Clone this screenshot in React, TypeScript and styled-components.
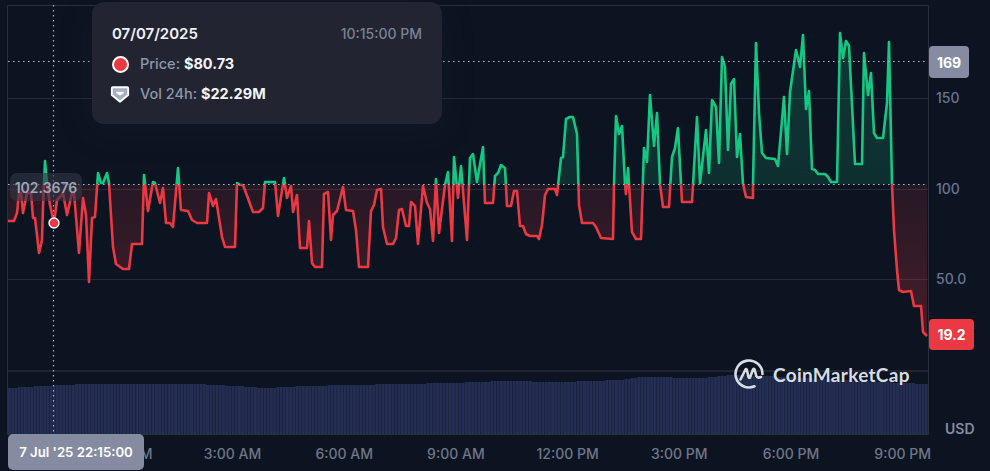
import React from "react";
import styled, { createGlobalStyle } from "styled-components";

const GlobalStyle = createGlobalStyle`
  html, body { margin: 0; padding: 0; background: #0d1421; overflow: hidden; }
  body { font-family: Inter, "Liberation Sans", sans-serif; }
`;

const LINE: [number, number][] = [
  [8,221],[14,221],[17,213],[19,193],[21,193],[23,213],[27,193],[31,193],[33,218],[35,218],[39,253],[42,240],[43,207],[45,161],[47,184],[50,205],[54,223],[57,200],[60,197],[63,193],[67,215],[72,193],[74,193],[79,253],[83,198],[86,215],[89,282],[92,218],[95,217],[98,173],[101,183],[103,183],[107,173],[109,183],
  [113,247],[116,264],[123,269],[129,269],[132,244],[142,244],[144,175],[145,183],[148,211],[153,182],[155,183],[160,203],[163,188],[166,223],[170,223],[173,227],[178,168],[181,210],[188,211],[192,220],[197,223],[207,223],[209,193],[213,206],[216,199],[222,237],[225,247],[235,247],[237,183],[240,185],[243,185],[253,212],[259,212],[263,208],[265,182],[275,182],[278,216],[284,178],[287,198],[291,186],[293,212],[297,195],[300,248],
  [307,248],[309,221],[312,263],[315,267],[322,267],[324,194],[328,192],[331,240],[333,215],[337,211],[343,187],[346,210],[353,211],[356,230],[359,267],[368,267],[371,211],[374,205],[377,190],[381,189],[383,227],[387,244],[393,244],[396,238],[399,210],[402,209],[406,226],[409,226],[411,202],[415,206],[418,244],[423,186],[427,203],[430,209],[433,241],[436,179],[439,233],[445,185],[448,172],[452,241],[454,157],[458,198],[461,166],[467,240],[470,158],[473,154],[477,182],[483,147],[485,203],[493,203],[495,176],[498,173],[501,165],[505,168],[507,206],[511,206],[514,191],[517,191],[520,226],[523,226],[526,234],[530,236],[537,236],[539,239],[542,225],[545,195],[548,189],[555,189],[557,195],[561,158],[563,157],[566,119],[570,117],[573,117],[577,134],[579,205],
  [582,223],[593,223],[596,227],[601,238],[613,239],[614,184],[616,116],[619,134],[622,126],[625,184],[626,194],[628,168],[632,232],[636,239],[641,239],[644,148],[647,162],[650,95],[654,146],[657,113],[660,184],[663,207],[669,207],[672,157],[675,148],[678,128],[681,184],[682,202],[692,202],[697,117],[700,183],[706,130],[709,173],[712,100],[716,107],[719,163],[722,57],[725,67],[728,150],[731,84],[734,79],[737,157],[740,134],[743,184],[746,197],[753,198],[753,184],[756,43],[759,113],[762,153],[766,158],[775,159],[778,166],[784,97],[787,154],[790,92],[796,50],[800,67],[803,35],[806,109],[809,91],[812,169],[815,170],[818,174],[825,174],[828,177],[831,182],[837,182],[840,33],[843,58],[846,41],[849,46],[855,164],[862,164],[864,53],[868,95],[871,73],[874,133],[877,138],[883,138],[887,103],[889,42],[892,184],[894,230],[897,270],[899,290],[903,292],[911,291],[914,306],[921,306],[923,332],[927,336],
];

const VOLUME_KNOTS: [number, number][] = [
  [8,388],[25,387],[37,386],[65,385],[90,383.5],[95,384],[205,384.5],[235,386],[262,388],[285,387],[300,386],[450,383],[500,381],[560,382],[620,380],[640,377],[700,378],[730,375],[765,376],[800,378],[860,381],[900,383],[928,384],
];

const volumeTop = (x: number) => {
  for (let i = 1; i < VOLUME_KNOTS.length; i++) {
    const [x0, y0] = VOLUME_KNOTS[i - 1];
    const [x1, y1] = VOLUME_KNOTS[i];
    if (x <= x1) return Math.round(y0 + ((y1 - y0) * (x - x0)) / (x1 - x0));
  }
  return 384;
};

const BAR_STEP = 920 / 288;
const BARS = Array.from({ length: 288 }, (_, i) => 8 + i * BAR_STEP);
const BASE_Y = 184.5;
const linePoints = LINE.map((p) => p.join(",")).join(" ");
const areaPoints = `8,${BASE_Y} ${linePoints} 927,${BASE_Y}`;

const TIME_LABELS = ["12:00 AM", "3:00 AM", "6:00 AM", "9:00 AM", "12:00 PM", "3:00 PM", "6:00 PM", "9:00 PM"];
const PRICE_LABELS = [
  { y: 98, text: "150" },
  { y: 189, text: "100" },
  { y: 279, text: "50.0" },
];

const Frame = styled.div`
  width: 990px;
  height: 471px;
  padding: 5px 0 0 7px;
  box-sizing: border-box;
  display: grid;
  grid-template-columns: 922px 1fr;
  grid-template-rows: 430px 36px;
  overflow: hidden;
  background: #0d1421;
`;

const Plot = styled.div`
  position: relative;
  grid-column: 1;
  grid-row: 1;
`;

const ChartSvg = styled.svg`
  display: block;
  width: 922px;
  height: 430px;
  overflow: visible;
`;

const Tooltip = styled.div`
  position: absolute;
  left: 85px;
  top: -3px;
  width: 350px;
  height: 122px;
  box-sizing: border-box;
  padding: 21px 20px 0;
  display: flex;
  flex-direction: column;
  background: #222531;
  border-radius: 12px;
  box-shadow: 0 8px 32px rgba(34, 37, 49, 0.22);
  font-size: 14.5px;
  line-height: 22px;
`;

const TooltipHeader = styled.div`
  display: flex;
  justify-content: space-between;
  height: 22px;
  margin-bottom: 8px;
`;

const TooltipDate = styled.span`
  color: #f1f3f7;
  font-size: 15px;
  font-weight: 600;
`;

const TooltipTime = styled.span`
  color: #7a8295;
  font-size: 14px;
  font-weight: 500;
`;

const TooltipRow = styled.div`
  display: flex;
  align-items: center;
  height: 22px;
  margin-bottom: 8px;
  margin-left: -2px;
  gap: 10px;
`;

const IconSlot = styled.span`
  width: 20px;
  height: 20px;
  display: flex;
  align-items: center;
  justify-content: center;
`;

const PriceDot = styled.span`
  flex: none;
  width: 13px;
  height: 13px;
  border: 2.5px solid #fff;
  border-radius: 50%;
  background: #ea3943;
`;

const RowLabel = styled.span`
  color: #8f97ab;
  font-weight: 500;
`;

const RowValue = styled.b`
  color: #f4f5f8;
  font-weight: 700;
`;

const CrossValue = styled.div`
  position: absolute;
  left: 3px;
  top: 168px;
  width: 72px;
  height: 28px;
  display: flex;
  align-items: center;
  justify-content: center;
  border-radius: 7px;
  background: rgba(50, 53, 70, 0.62);
  color: #a0a5b7;
  font-size: 14px;
  font-weight: 600;
`;

const Watermark = styled.div`
  position: absolute;
  left: 726px;
  top: 353px;
  display: flex;
  align-items: center;
  gap: 8px;
  color: #d8dce4;
  font-family: Lato, "Noto Sans", sans-serif;
  font-size: 19px;
  font-weight: 700;
  letter-spacing: 0.3px;
`;

const PriceAxis = styled.div`
  position: relative;
  grid-column: 2;
  grid-row: 1 / span 2;
`;

const AxisLabel = styled.span<{ $y: number }>`
  position: absolute;
  left: 7px;
  top: ${(p) => p.$y - 5 - 10}px;
  line-height: 20px;
  color: #687592;
  font-size: 14px;
  font-weight: 500;
`;

const PriceBadge = styled.div<{ $top: number; $width: number; $height: number; $bg: string }>`
  position: absolute;
  left: 0;
  top: ${(p) => p.$top}px;
  width: ${(p) => p.$width}px;
  height: ${(p) => p.$height}px;
  display: flex;
  align-items: center;
  justify-content: center;
  border-radius: 4px;
  background: ${(p) => p.$bg};
  color: #fff;
  font-size: 14px;
  font-weight: 700;
`;

const UnitLabel = styled.span`
  position: absolute;
  left: 16px;
  top: 414px;
  line-height: 20px;
  color: #858ca2;
  font-size: 14px;
  font-weight: 600;
`;

const TimeAxis = styled.div`
  position: relative;
  grid-column: 1;
  grid-row: 2;
  display: flex;
  padding-left: 58px;
`;

const TimeLabel = styled.span`
  flex: 0 0 111.7px;
  text-align: center;
  white-space: nowrap;
  line-height: 38px;
  color: #6f7689;
  font-size: 14px;
  font-weight: 500;
`;

const DateBadge = styled.div`
  position: absolute;
  left: 1px;
  top: -1px;
  width: 136px;
  height: 36px;
  display: flex;
  align-items: center;
  justify-content: center;
  border-radius: 5px;
  background: #858ca2;
  color: #fff;
  font-size: 13.2px;
  font-weight: 600;
`;

const VolumeIcon = () => (
  <svg width="22" height="19" viewBox="0 0 22 19">
    <path d="M2 2.5 Q2 1.5 3 1.5 H19 Q20 1.5 20 2.5 V10 L11 17.5 L2 10 Z" fill="#a6b0c3" stroke="#fff" strokeWidth="2" strokeLinejoin="round" />
    <path d="M7 6.5 H15 V8 L11 10.5 L7 8 Z" fill="#fff" />
  </svg>
);

const CmcLogo = () => (
  <svg width="32" height="32" viewBox="0 0 32 32" fill="none" stroke="#d8dce4" strokeWidth="2.6" strokeLinecap="round" strokeLinejoin="round">
    <path d="M29.5 16 A13.5 13.5 0 1 0 21.5 28.3" />
    <path d="M7.5 21.5 L12.5 11.5 Q13.2 10.5 13.8 11.8 L15.5 19 Q16.2 20.8 17.2 19 L20 11.5 Q21 10 21.6 11.5 L23.3 18 Q24.5 20.5 28 19" />
  </svg>
);

export default function App() {
  return (
    <>
      <GlobalStyle />
      <Frame>
        <Plot>
          <ChartSvg viewBox="7 5 922 430">
            <defs>
              <clipPath id="above"><rect x="0" y="0" width="990" height={BASE_Y} /></clipPath>
              <clipPath id="below"><rect x="0" y={BASE_Y} width="990" height="286" /></clipPath>
              <linearGradient id="greenFill" gradientUnits="userSpaceOnUse" x1="0" y1="33" x2="0" y2="184">
                <stop offset="0" stopColor="#16c784" stopOpacity="0.2" />
                <stop offset="1" stopColor="#16c784" stopOpacity="0.15" />
              </linearGradient>
              <linearGradient id="redFill" gradientUnits="userSpaceOnUse" x1="0" y1="184" x2="0" y2="336">
                <stop offset="0" stopColor="#ea3943" stopOpacity="0.11" />
                <stop offset="1" stopColor="#ea3943" stopOpacity="0.26" />
              </linearGradient>
            </defs>

            <g stroke="#262a36" strokeWidth="1">
              <line x1="8" x2="928" y1="98.5" y2="98.5" />
              <line x1="8" x2="928" y1="189.5" y2="189.5" />
              <line x1="8" x2="928" y1="279.5" y2="279.5" />
              <line x1="8" x2="928" y1="371" y2="371" strokeWidth="1.5" />
            </g>

            <g fill="#232e52">
              {BARS.map((x) => {
                const top = volumeTop(x);
                return <rect key={x} x={x} y={top} width={BAR_STEP - 0.25} height={434 - top} />;
              })}
            </g>

            <polygon points={areaPoints} fill="url(#greenFill)" clipPath="url(#above)" />
            <polygon points={areaPoints} fill="url(#redFill)" clipPath="url(#below)" />
            <polyline points={linePoints} fill="none" stroke="#16c784" strokeWidth="2.6" strokeLinejoin="round" clipPath="url(#above)" />
            <polyline points={linePoints} fill="none" stroke="#ea3943" strokeWidth="2.6" strokeLinejoin="round" clipPath="url(#below)" />

            <g stroke="#2b2f3c" strokeWidth="1" fill="none">
              <path d="M7.5 434.5 V5.5 H928.5 V434.5 H7.5" />
            </g>

            <g stroke="#aeb2bd" strokeWidth="1.2" strokeDasharray="1.6 3.4" fill="none">
              <line x1="8" x2="928" y1="61.5" y2="61.5" />
              <line x1="8" x2="928" y1={BASE_Y} y2={BASE_Y} />
              <line x1="53.5" x2="53.5" y1="5" y2="434" />
            </g>

            <circle cx="54" cy="223" r="5" fill="#ea3943" stroke="#fff" strokeWidth="1.4" />
          </ChartSvg>

          <CrossValue>102.3676</CrossValue>

          <Watermark>
            <CmcLogo />
            <span>CoinMarketCap</span>
          </Watermark>

          <Tooltip>
            <TooltipHeader>
              <TooltipDate>07/07/2025</TooltipDate>
              <TooltipTime>10:15:00 PM</TooltipTime>
            </TooltipHeader>
            <TooltipRow>
              <IconSlot><PriceDot /></IconSlot>
              <span><RowLabel>Price: </RowLabel><RowValue>$80.73</RowValue></span>
            </TooltipRow>
            <TooltipRow>
              <IconSlot><VolumeIcon /></IconSlot>
              <span><RowLabel>Vol 24h: </RowLabel><RowValue>$22.29M</RowValue></span>
            </TooltipRow>
          </Tooltip>
        </Plot>

        <PriceAxis>
          {PRICE_LABELS.map((l) => (
            <AxisLabel key={l.text} $y={l.y}>{l.text}</AxisLabel>
          ))}
          <PriceBadge $top={41} $width={40} $height={32} $bg="#858ca2">169</PriceBadge>
          <PriceBadge $top={314} $width={45} $height={31} $bg="#ea3943">19.2</PriceBadge>
          <UnitLabel>USD</UnitLabel>
        </PriceAxis>

        <TimeAxis>
          {TIME_LABELS.map((t) => (
            <TimeLabel key={t}>{t}</TimeLabel>
          ))}
          <DateBadge>7 Jul '25 22:15:00</DateBadge>
        </TimeAxis>
      </Frame>
    </>
  );
}
